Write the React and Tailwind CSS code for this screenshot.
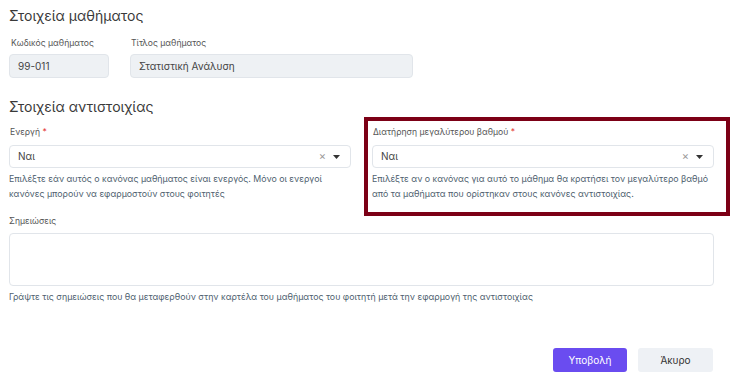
export default function App() {
  return (
    <div className="w-[734px] h-[388px] bg-white text-[#333] font-['Inter','Noto_Sans',sans-serif] overflow-hidden">
      <div className="pl-[9px] pr-[20px]">
        <h2 className="pt-[7px] text-[14px] leading-[18px] text-[#3a3a3a]">Στοιχεία μαθήματος</h2>

        <div className="mt-[11px] flex gap-[21px]">
          <div className="w-[100px]">
            <div className="text-[8.6px] leading-[14px] text-[#555] pl-[2px]">Κωδικός μαθήματος</div>
            <div className="mt-[4px] h-[24px] rounded-[4px] border border-[#e1e5ea] bg-[#eef1f4] px-[8px] flex items-center text-[10px] text-[#444]">
              99-011
            </div>
          </div>
          <div className="w-[283px]">
            <div className="text-[8.6px] leading-[14px] text-[#555] pl-[1px]">Τίτλος μαθήματος</div>
            <div className="mt-[4px] h-[24px] rounded-[4px] border border-[#e1e5ea] bg-[#eef1f4] px-[8px] flex items-center text-[10px] text-[#444]">
              Στατιστική Ανάλυση
            </div>
          </div>
        </div>

        <h2 className="mt-[20px] text-[14px] leading-[18px] text-[#3a3a3a]">Στοιχεία αντιστοιχίας</h2>

        <div className="mt-[9px] grid grid-cols-2 gap-[21px]">
          <Field
            label="Ενεργή"
            help="Επιλέξτε εάν αυτός ο κανόνας μαθήματος είναι ενεργός. Μόνο οι ενεργοί κανόνες μπορούν να εφαρμοστούν στους φοιτητές"
          />
          <div className="relative">
            <Field
              label="Διατήρηση μεγαλύτερου βαθμού"
              help="Επιλέξτε αν ο κανόνας για αυτό το μάθημα θα κρατήσει τον μεγαλύτερο βαθμό από τα μαθήματα που ορίστηκαν στους κανόνες αντιστοιχίας."
            />
            {/* highlight annotation */}
            <div className="absolute -left-[8px] -right-[16px] -top-[8px] -bottom-[15px] border-4 border-[#7c0016] pointer-events-none" />
          </div>
        </div>

        <div className="mt-[13px]">
          <div className="text-[8.6px] leading-[14px] text-[#555]">Σημειώσεις</div>
          <div className="mt-[5px] h-[53px] rounded-[4px] border border-[#e1e5ea] bg-white" />
          <p className="mt-[4px] text-[8.8px] leading-[14px] text-[#4f5f6f]">
            Γράψτε τις σημειώσεις που θα μεταφερθούν στην καρτέλα του μαθήματος του φοιτητή μετά την εφαρμογή της αντιστοιχίας
          </p>
        </div>

        <div className="mt-[44px] flex justify-end gap-[11px] pr-[1px]">
          <button className="w-[74px] h-[24px] rounded-[3px] bg-[#6a4cf0] text-white text-[10px]">Υποβολή</button>
          <button className="w-[75px] h-[24px] rounded-[3px] bg-[#eef1f5] text-[#333] text-[10px]">Άκυρο</button>
        </div>
      </div>
    </div>
  );
}

function Field({ label, help }) {
  return (
    <div>
      <div className="text-[8.6px] leading-[14px] text-[#555] pl-[1px]">
        {label} <span className="text-[#e53e3e]">*</span>
      </div>
      <div className="mt-[6px] h-[23px] rounded-[4px] border border-[#e1e5ea] bg-white pl-[8px] pr-[10px] flex items-center text-[10px] text-[#444]">
        <span className="flex-1">Ναι</span>
        <span className="text-[#999] text-[11px] leading-none mr-[7px]">×</span>
        <svg width="7" height="4" viewBox="0 0 7 4"><path d="M0 0h7L3.5 4z" fill="#333" /></svg>
      </div>
      <p className="mt-[3px] text-[8.8px] leading-[15px] text-[#4f5f6f]">{help}</p>
    </div>
  );
}
